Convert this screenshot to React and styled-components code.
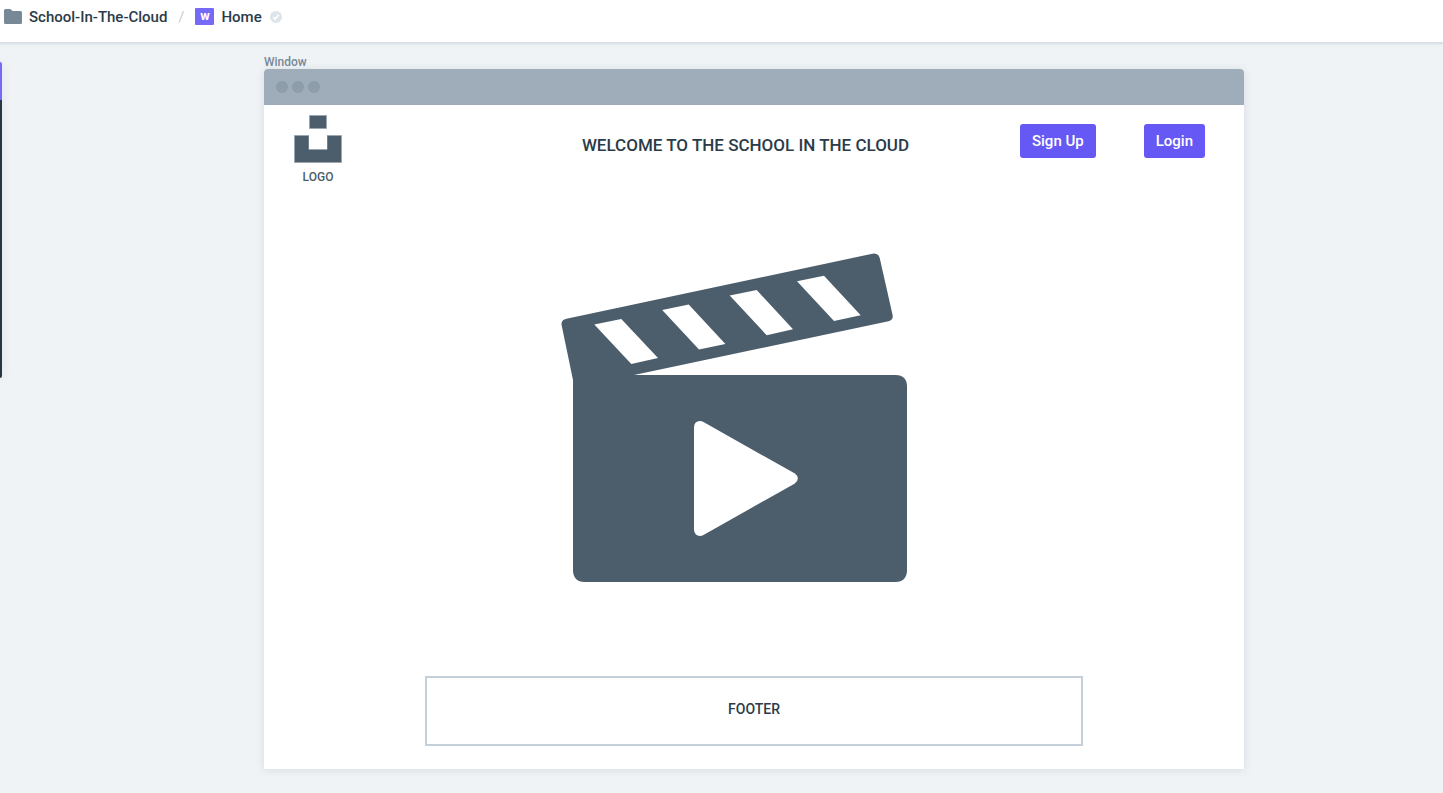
import React from "react";
import styled, { createGlobalStyle } from "styled-components";

const GlobalStyle = createGlobalStyle`
  *, *::before, *::after { box-sizing: border-box; }
  body {
    margin: 0;
    background: #eff3f6;
    color: #2b3b48;
    font-family: Roboto, "Liberation Sans", sans-serif;
    font-weight: 500;
  }
`;

const Page = styled.div`
  display: flex;
  flex-direction: column;
  min-height: 100vh;
`;

const TopBar = styled.header`
  height: 42px;
  padding: 0 4px;
  background: #fff;
  box-shadow: 0 1px 2px 1px rgba(43, 59, 72, 0.12);
`;

const Breadcrumb = styled.nav`
  display: flex;
  align-items: center;
  height: 33px;
`;

const Crumb = styled.a`
  display: flex;
  align-items: center;
  gap: 7px;
  color: #2b3b48;
  font-size: 15px;
  line-height: 20px;
  text-decoration: none;
  white-space: nowrap;
`;

const Slash = styled.span`
  width: 28px;
  color: #c3cfd9;
  font-size: 15px;
  font-weight: 400;
  text-align: center;
`;

const Tag = styled.span`
  width: 19px;
  height: 17px;
  border-radius: 1px;
  background: #7669f6;
  color: #fff;
  font-family: Inter, sans-serif;
  font-size: 9px;
  font-weight: 800;
  line-height: 17px;
  text-align: center;
`;

const Saved = styled.svg`
  margin-left: 8px;
`;

const Workspace = styled.main`
  display: flex;
  align-items: flex-start;
  flex: 1;
  padding: 12px 199px 24px 0;
`;

const ToolRail = styled.aside`
  flex: none;
  width: 2px;
  height: 316px;
  margin: 8px 262px 0 0;
  border-radius: 0 3px 3px 0;
  background: linear-gradient(#7669f6 38px, #263542 38px);
  box-shadow: 0 2px 10px rgba(43, 59, 72, 0.18);
`;

const Frame = styled.section`
  flex: 1;
  min-width: 0;
`;

const FrameLabel = styled.div`
  height: 15px;
  color: #778896;
  font-size: 12px;
  line-height: 17px;
`;

const Window = styled.div`
  border-radius: 4px 4px 1px 1px;
  background: #fff;
  box-shadow: 0 1px 8px rgba(43, 59, 72, 0.12);
`;

const TitleBar = styled.div`
  display: flex;
  align-items: center;
  gap: 4px;
  height: 36px;
  padding: 0 12px;
  border-radius: 4px 4px 0 0;
  background: #9eadb9;
`;

const Dot = styled.span`
  width: 12px;
  height: 12px;
  border-radius: 50%;
  background: #8d9dab;
`;

const SiteHeader = styled.div`
  display: grid;
  grid-template-columns: 1fr auto 1fr;
  align-items: start;
  padding: 10px 39px 0 30px;
`;

const Logo = styled.figure`
  display: flex;
  flex-direction: column;
  align-items: center;
  gap: 6px;
  width: 48px;
  margin: 0;
`;

const LogoCaption = styled.figcaption`
  color: #4c5d6b;
  font-size: 12px;
  line-height: 16px;
`;

const Title = styled.h1`
  margin: 0;
  padding: 18px 8px 0 0;
  font-size: 17px;
  font-weight: 500;
  line-height: 24px;
  white-space: nowrap;
`;

const Actions = styled.div`
  display: flex;
  justify-content: flex-end;
  gap: 48px;
  padding-top: 9px;
`;

const Button = styled.button`
  height: 34px;
  padding: 0 12px;
  border: 0;
  border-radius: 3px;
  background: #6558f5;
  color: #fff;
  font: inherit;
  font-size: 15px;
  white-space: nowrap;
`;

const Hero = styled.div`
  display: flex;
  justify-content: center;
  padding: 68px 40px 94px 0;
`;

const SiteFooter = styled.footer`
  display: flex;
  align-items: center;
  justify-content: center;
  height: 70px;
  margin: 0 161px;
  padding-bottom: 4px;
  border: 2px solid #c4cfda;
  font-size: 14px;
`;

const Content = styled.div`
  padding-bottom: 23px;
`;

function FolderIcon() {
  return (
    <svg width="18" height="15" viewBox="0 0 18 15" aria-hidden="true">
      <path
        d="M1.5 0H6.3L8.6 2H16.5Q18 2 18 3.500V13.500Q18 15 16.500 15H1.500Q0 15 0 13.500V1.500Q0 0 1.500 0Z"
        fill="#778896"
      />
    </svg>
  );
}

function SavedIcon() {
  return (
    <Saved width="12" height="12" viewBox="0 0 12 12" aria-hidden="true">
      <circle cx="6" cy="6" r="6" fill="#dde4eb" />
      <path d="M3.300 6.200L5.200 8.100L8.600 3.700" fill="none" stroke="#fff" strokeWidth="1.700" />
    </Saved>
  );
}

function LogoMark() {
  return (
    <svg width="48" height="48" viewBox="0 0 48 48" aria-hidden="true">
      <g fill="#4c5d6b" stroke="#9ba7b1" strokeWidth="1">
        <path d="M15.500 0.500H32.500V13.500H15.500Z" />
        <path d="M0.500 20.500H15V34.500H33V20.500H47.500V47.500H0.500Z" />
      </g>
      <path d="M15 20H33V34H15Z" fill="#fff" />
    </svg>
  );
}

function Clapperboard() {
  return (
    <svg width="346" height="329" viewBox="0 0 346 329" role="img" aria-label="Video">
      <path
        fill="#4c5d6b"
        d="M5.500 65.800L311.500 0.700Q317.300 -0.500 318.700 5L331.600 62Q332.500 67 327.500 68.200L73 122H334.500Q346 122.300 346 133.500V317.500Q345.700 328.700 334.500 329H23.500Q12.300 328.700 12 317.500V127L0.600 72Q-0.200 67 5.500 65.800Z"
      />
      <g fill="#fff">
        <path d="M33.300 71.500L60.300 65.900L97 105L70.300 110.900Z" />
        <path d="M101.200 57L127.700 51.400L164.400 90.900L138 96.400Z" />
        <path d="M168.700 42.600L195.700 37L232 76.300L205.700 82.200Z" />
        <path d="M236 28.300L263 22.700L299.700 62.300L273 68Z" />
        <path d="M133 174Q133.400 168.200 139 168Q140.500 168 142.500 169.100L233.500 220.300Q236.800 222.500 236.800 225.500Q236.800 228.500 233.500 230.700L142.500 281.900Q140.500 283 139 283Q133.400 282.600 133 277Z" />
      </g>
    </svg>
  );
}

export default function App() {
  return (
    <Page>
      <GlobalStyle />
      <TopBar>
        <Breadcrumb aria-label="Breadcrumb">
          <Crumb href="#project">
            <FolderIcon />
            School-In-The-Cloud
          </Crumb>
          <Slash>/</Slash>
          <Crumb href="#home">
            <Tag>W</Tag>
            Home
          </Crumb>
          <SavedIcon />
        </Breadcrumb>
      </TopBar>
      <Workspace>
        <ToolRail />
        <Frame>
          <FrameLabel>Window</FrameLabel>
          <Window>
            <TitleBar>
              <Dot />
              <Dot />
              <Dot />
            </TitleBar>
            <Content>
              <SiteHeader>
                <Logo>
                  <LogoMark />
                  <LogoCaption>LOGO</LogoCaption>
                </Logo>
                <Title>WELCOME TO THE SCHOOL IN THE CLOUD</Title>
                <Actions>
                  <Button type="button">Sign Up</Button>
                  <Button type="button">Login</Button>
                </Actions>
              </SiteHeader>
              <Hero>
                <Clapperboard />
              </Hero>
              <SiteFooter>FOOTER</SiteFooter>
            </Content>
          </Window>
        </Frame>
      </Workspace>
    </Page>
  );
}
